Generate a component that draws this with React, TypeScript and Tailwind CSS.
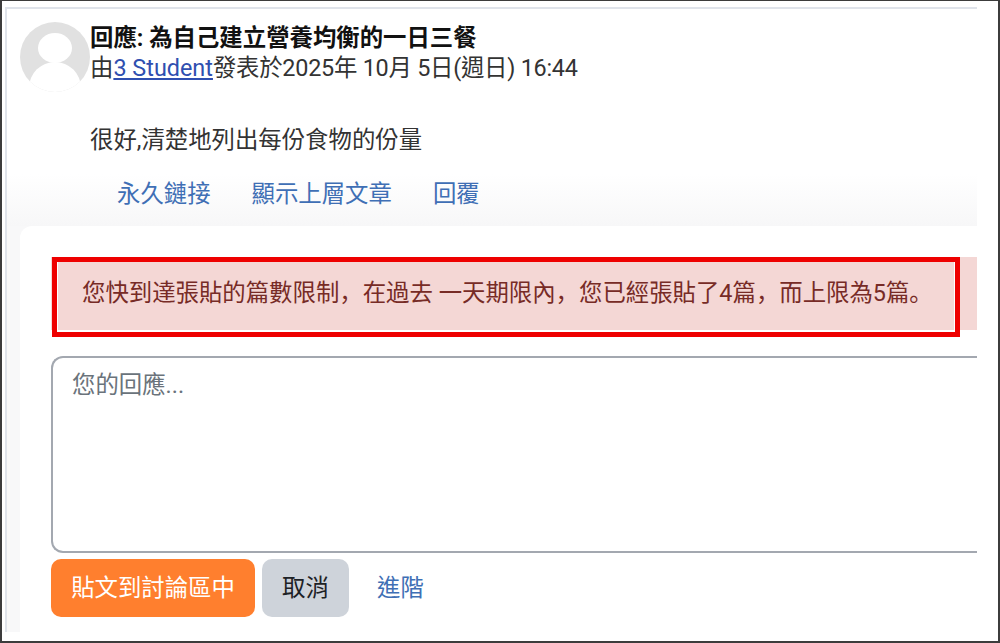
const FONT = "font-['Roboto','Noto_Sans_CJK_TC',sans-serif]";

function Avatar() {
  return (
    <svg width="70" height="70" viewBox="0 0 70 70" className="shrink-0">
      <defs>
        <clipPath id="avatar-clip">
          <circle cx="35" cy="35" r="35" />
        </clipPath>
      </defs>
      <g clipPath="url(#avatar-clip)">
        <rect width="70" height="70" fill="#e1e1e1" />
        <ellipse cx="35" cy="26" rx="17" ry="15" fill="#fff" />
        <ellipse cx="35" cy="66" rx="26" ry="26" fill="#fff" />
      </g>
    </svg>
  );
}

export default function App() {
  return (
    <div className={`${FONT} w-[1000px] h-[643px] overflow-hidden bg-white border-2 border-t-[1px] border-[#3c3c3c] pl-[3px] pt-[6px] text-[23.4px] leading-[30px] text-[#1d2125]`}>
      {/* Post + reply panel */}
      <div className="w-[972px] h-[625px] flex flex-col border-t-[2px] border-l-[2px] border-[#dfe3ea]">
        {/* Post */}
        <div className="h-[217px] shrink-0 flex bg-linear-to-b/srgb from-white from-[76%] to-[#f7f7f8] pl-[13px] pt-[13px]">
          <Avatar />
          <div className="min-w-0">
            <div className="font-bold leading-[32px] text-[#111]">回應: 為自己建立營養均衡的一日三餐</div>
            <div className="leading-[30px] text-[#333] -mt-[1px]">
              由<a className="text-[#2f4fb0] underline">3 Student</a>
              <span className="tracking-[-0.25px]">發表於2025年 10月 5日(週日) 16:44</span>
            </div>
            <p className="mt-[42px] text-[#333]">很好,清楚地列出每份食物的份量</p>
            <div className="mt-[24px] ml-[27px] flex gap-[41px] text-[#3f6fb5]">
              <a>永久鏈接</a>
              <a>顯示上層文章</a>
              <a>回覆</a>
            </div>
          </div>
        </div>

        {/* Reply form */}
        <div className="flex-1 bg-[#f8f8f9] pl-[13px] flex min-h-0">
          <div className="flex-1 bg-white rounded-tl-[12px] pt-[31px] pl-[31px]">
            <div className="relative h-[73px] bg-[#f4d7d5] text-[#772b26] flex items-center pl-[31px] pb-[2px] whitespace-nowrap font-['Roboto','Noto_Sans_CJK_SC',sans-serif]">
              您快到達張貼的篇數限制，在過去 一天期限內，您已經張貼了4篇，而上限為5篇。
              <div className="absolute left-[1px] top-0 w-[908px] h-[80px] border-[5px] border-[#ee0000] shadow-[inset_-1px_0_0_0_#fff,inset_1px_0_0_0_#fff]" />
            </div>
            <div className="mt-[26px] h-[197px] border-2 border-r-0 border-[#a3a8b0] rounded-l-[12px] pl-[19px] pt-[12px] text-[#6a737b]">
              您的回應...
            </div>
            <div className="mt-[6px] flex items-center">
              <button className="h-[58px] w-[204px] rounded-[10px] bg-[#ff7f2e] text-white">貼文到討論區中</button>
              <button className="ml-[7px] h-[58px] w-[87px] rounded-[10px] bg-[#ced3da] text-[#1d2125]">取消</button>
              <a className="ml-[28px] text-[#3f6fb5]">進階</a>
            </div>
          </div>
        </div>
      </div>
    </div>
  );
}
